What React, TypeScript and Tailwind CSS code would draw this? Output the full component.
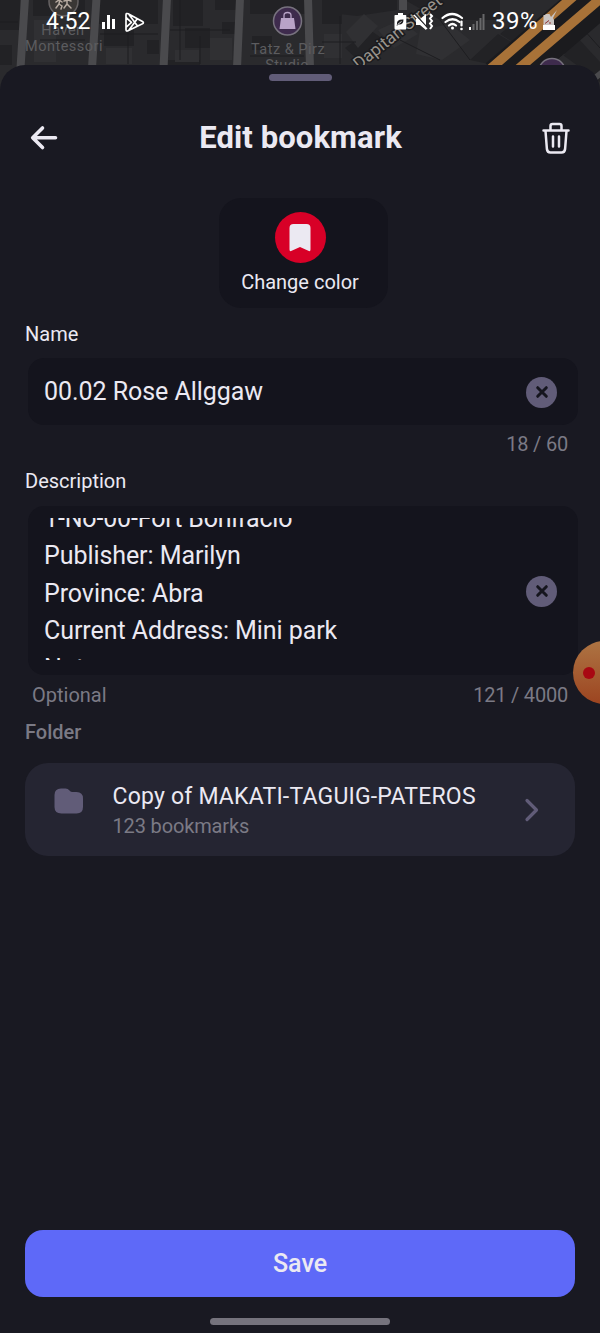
import React from "react";

function MapBackdrop() {
  return (
    <svg className="absolute left-0 top-0" width="600" height="110" viewBox="0 0 600 110">
      <rect width="600" height="110" fill="#2a2a2d" />
      <g fill="#222225">
        <path d="M0 0h20v30H0zM33 0h52v16H33zM98 0h60v24H98zM104 20h30v26h-30zM173 0h30v26h-30zM185 28h25v20h-25zM215 0h22v10h-22zM222 22h14v12h-14zM147 40h12v14h-12zM250 0h55v14h-55zM252 36h20v14h-20zM168 60h32v6h-32z" />
        <path d="M322 0h75v10l-40 6-35-4zM322 12h20v12h-20zM345 48l25-18 20 14-28 20zM405 0h95v20h-60zM470 60l28-26 20 12-20 20zM500 34l22-18 8 14-14 14zM560 20l30-20h10v20l-24 22zM556 50l20-14 24 26v20zM0 45h12v20H0z" />
      </g>
      <g fill="#303033">
        <path d="M346 32l18-18 14 12-20 22zM378 30l22-10 18 14-24 14zM324 34h18v24h-18zM420 30l30-6 20 16-28 20-26-6zM545 46l20 8-12 10zM34 20h22v42H34zM106 48h26v16h-26zM175 50h24v12h-24zM210 38h22v22h-22z" />
      </g>
      <g stroke="#1d1d20" strokeWidth="1" fill="none">
        <path d="M0 22h18M40 40h45M128 20v44M100 34h58M180 0v60M170 30h60M200 36v28M250 56h54M340 16v48M322 42h34M440 20l30 40M400 40l40 20M575 20l25 28" />
      </g>
      <g stroke="#4a4a4d" strokeWidth="8" fill="none">
        <path d="M25 -2L20.500 68M96.500 -2L92 68M167 -2L163.500 68M240 -2L237 68M308 -2L310 68" />
        <path d="M403 -2v12" />
        <path d="M585 86L610 66" strokeWidth="6" />
      </g>
      <g stroke="#1b1b1e" strokeWidth="44">
        <path d="M500 80L612 -16" />
      </g>
      <g stroke="#a87238" strokeWidth="9.500">
        <path d="M489 70L575 -5M517 70L607 -7" />
      </g>
      <g fontFamily="Roboto, sans-serif" fill="#5c5c5f" fontSize="14.500" textAnchor="middle">
        <text x="63" y="35" letterSpacing="0.5">Haven</text>
        <text x="64" y="51" letterSpacing="0.5">Montessori</text>
        <text x="288" y="54" letterSpacing="0.5">Tatz &amp; Pirz</text>
        <text x="287" y="70" letterSpacing="0.4">Studio</text>
      </g>
      <text
        transform="translate(359 70) rotate(-38.500)"
        fontFamily="Roboto, sans-serif"
        fontSize="17"
        letterSpacing="0"
        fill="#98938c"
        stroke="#1b1b1e"
        strokeWidth="3"
        paintOrder="stroke"
      >
        Dapitan Street
      </text>
      <circle cx="63.500" cy="1.500" r="14.500" fill="#3a3735" stroke="#666263" strokeWidth="1.500" />
      <g stroke="#b8aca2" strokeWidth="1.500" fill="none" strokeLinecap="round">
        <path d="M56 2l3-2 3 2M60 -1l-1 5-3 4M59 4l3 2-1 3M64 1l4-1 3 1M67 -1v5l-3 4M67 4l4 4" />
      </g>
      <circle cx="287.500" cy="21" r="14" fill="#3e2b4d" stroke="#77727e" strokeWidth="1.500" />
      <path d="M281 18h13l1.500 11h-16z" fill="#b9a3c8" />
      <path d="M284 18v-2.500q0-3 3.500-3t3.500 3v2.500" fill="none" stroke="#b9a3c8" strokeWidth="1.300" />
      <circle cx="552" cy="72" r="13.500" fill="#3e2b4d" stroke="#77727e" strokeWidth="1.500" />
    </svg>
  );
}

function StatusBar() {
  return (
    <div className="relative flex h-[65px] items-start pl-[46px] pr-[41px] pt-[8px] text-white">
      <span className="w-[46px] text-[23px] leading-[27px]">4:52</span>
      <svg className="ml-[9px] mt-[4px]" width="46" height="22" viewBox="0 0 46 22">
        <path d="M1 10h3v7H1zM6 3h3v14H6zM11 7h3v10h-3z" fill="#fff" />
        <path
          d="M27.200 1.800Q25 .8 25 3v14.500q0 2.200 2 1.200l14.500-7q1.800-1 0-2.200zM28 2.500l8.500 11.500M28 18l8.500-11.500M25.500 6l5 4.300-5 4.500"
          fill="none"
          stroke="#fff"
          strokeWidth="1.700"
          strokeLinejoin="round"
        />
      </svg>
      <svg className="ml-auto mt-[2px]" width="94" height="26" viewBox="0 0 94 26">
        <path d="M4 3h5v2h2.500q.8 0 .8.800v12.700q0 1-1 1H1.500q-1 0-1-1V5.800Q.5 5 1.300 5H4z" fill="#fff" />
        <path d="M3 14q-.5-5 6.500-4.500 0 5.500-5 5l-1.800 1.500" fill="#1d1d20" />
        <path d="M3.500 14.500l4-3" stroke="#fff" strokeWidth=".8" />
        <path d="M22 9h4l6-5v16l-6-5h-4z" fill="#fff" />
        <path d="M21 4l13 14.500" stroke="#29292c" strokeWidth="1.500" />
        <path d="M20 5l13 14" stroke="#fff" strokeWidth="1.300" />
        <path d="M36 4l2 2-2 2.500 2 2.500-2 2.500 2 2.500-2 3" fill="none" stroke="#fff" strokeWidth="2" />
        <g fill="none" stroke="#fff" strokeWidth="2.200" strokeLinecap="round">
          <path d="M48.500 8q9.500-8 19.500 0M51.500 12q7-5.500 14 0M55 15.500q3.500-3 7 0" />
          <path d="M67.500 11.500v4" />
        </g>
        <circle cx="58.500" cy="18" r="1.500" fill="#fff" />
        <circle cx="67.500" cy="19" r="1.300" fill="#fff" />
        <path d="M75 17h2v3h-2z" fill="#fff" />
        <path d="M78.500 14h2v6h-2zM82 11h2v9h-2zM85.500 8h2v12h-2zM88.500 4h2v16h-2z" fill="#68686a" />
      </svg>
      <span className="ml-[4px] w-[50px] text-[24px] leading-[27px] tracking-[0.5px]">39%</span>
      <svg className="mt-[1px]" width="17" height="22" viewBox="0 0 17 22">
        <path d="M1.500 6h2V5h4l1.500 3 6-7-4 8 1 2v9H1.500z" fill="#c9c4c2" />
        <path d="M1 16h12v5H1z" fill="#fff" />
        <path d="M3 14.500l4-3M7 14h2" stroke="#8f3434" strokeWidth="1" />
      </svg>
    </div>
  );
}

function ClearButton() {
  return (
    <button aria-label="Clear" className="mt-px flex size-[31px] items-center justify-center rounded-full bg-[#615c78]">
      <svg width="14" height="14" viewBox="0 0 14 14">
        <path d="M2.700 2.700l8.600 8.600M11.300 2.700l-8.600 8.600" stroke="#15151e" strokeWidth="3" strokeLinecap="round" />
      </svg>
    </button>
  );
}

export default function App() {
  return (
    <div className="relative flex h-[1333px] w-[600px] flex-col overflow-hidden bg-[#191922] font-['Roboto',sans-serif] text-[#ebe9f2]">
      <MapBackdrop />
      <StatusBar />
      <main className="relative flex flex-1 flex-col rounded-t-[25px] bg-[#191922] px-[25px]">
        <div className="mt-[9px] h-[7px] w-[63px] self-center rounded-full bg-[#615c78]" />

        <header className="mt-[27px] flex h-[60px] items-center justify-between">
          <button aria-label="Back" className="pl-[5px]">
            <svg width="30" height="26" viewBox="0 0 30 26">
              <path d="M25.500 12.700H3M12.500 3L2.700 12.700l9.800 9.800" fill="none" stroke="#ebe9f2" strokeWidth="3.600" strokeLinecap="round" strokeLinejoin="round" />
            </svg>
          </button>
          <h1 className="text-[31px] font-bold leading-[36px] tracking-[0.1px]">Edit bookmark</h1>
          <button aria-label="Delete" className="pr-[4px]">
            <svg width="30" height="34" viewBox="0 0 30 34">
              <g fill="none" stroke="#ebe9f2" strokeWidth="2.500" strokeLinecap="round" strokeLinejoin="round">
                <path d="M2.500 9.500h25M9.500 9V5q0-2 2-2h7q2 0 2 2v4M4.500 10l1.400 18q.4 3.500 3.500 3.500h11.200q3.100 0 3.500-3.500L25.500 10M12 15.500v10M18 15.500v10" />
              </g>
            </svg>
          </button>
        </header>

        <button className="ml-[194px] mt-[30px] flex h-[110px] w-[169px] flex-col items-center rounded-[22px] bg-[#14141d] pr-[7px] pt-[14px]">
          <span className="flex size-[51px] items-center justify-center rounded-full bg-[#d80027]">
            <svg width="22" height="28" viewBox="0 0 22 28">
              <path d="M4.500 0h13q4 0 4 4v21.500q0 2.500-2.200 1.300L11 23l-8.300 3.800Q.5 28 .5 25.500V4q0-4 4-4z" fill="#ebe9f2" />
            </svg>
          </span>
          <span className="mt-[7px] text-[20px] leading-[24px]">Change color</span>
        </button>

        <label className="mt-[14px] text-[20px] leading-[24px]">Name</label>
        <div className="ml-[3px] -mr-[3px] mt-[12px] flex h-[67px] items-center justify-between rounded-[16px] bg-[#14141d] pl-[16px] pr-[21px]">
          <span className="text-[25px] leading-[30px] tracking-[-0.05px]">00.02 Rose Allggaw</span>
          <ClearButton />
        </div>
        <div className="mr-[7px] mt-[7px] self-end text-[20px] leading-[24px] tracking-[-0.2px] text-[#7b7a85]">18 / 60</div>

        <label className="mt-[13px] text-[20px] leading-[24px]">Description</label>
        <div className="ml-[3px] -mr-[3px] mt-[13px] flex h-[169px] items-center justify-between rounded-[16px] bg-[#14141d] pl-[16px] pr-[21px]">
          <div className="mt-[12px] h-[142px] self-start overflow-hidden text-[25px] leading-[37.5px] tracking-[-0.07px]">
            <div className="-mt-[18.5px]">
              <p className="tracking-[-0.15px]">1-No-00-Fort Bonifacio</p>
              <p>Publisher: Marilyn</p>
              <p>Province: Abra</p>
              <p>Current Address: Mini park</p>
              <p>Note</p>
            </div>
          </div>
          <ClearButton />
        </div>
        <div className="ml-[7px] mr-[7px] mt-[8px] flex justify-between text-[20px] leading-[24px] text-[#7b7a85]">
          <span>Optional</span>
          <span className="tracking-[-0.2px]">121 / 4000</span>
        </div>

        <h2 className="mt-[13px] text-[20px] font-medium leading-[24px] text-[#7b7a85]">Folder</h2>
        <button className="mt-[19px] flex h-[93px] items-center rounded-[23px] bg-[#252532] pl-[29px] pr-[35px] text-left">
          <svg className="mb-[18px]" width="30" height="26" viewBox="0 0 30 26">
            <path d="M7 .5h4.500q2.500 0 4 2 1.300 1.500 3 1.500H22.500q6.500 0 6.500 6.500v8.500q0 6.500-6.500 6.500H7.500Q.5 25.500.5 19V7Q.5.500 7 .5z" fill="#615c78" />
          </svg>
          <span className="ml-[28.5px] mt-[2px] flex flex-col">
            <span className="text-[23px] leading-[30px] tracking-[0.2px]">Copy of MAKATI-TAGUIG-PATEROS</span>
            <span className="text-[20px] leading-[28px] tracking-[-0.15px] text-[#7b7a85]">123 bookmarks</span>
          </span>
          <svg className="ml-auto" width="16" height="26" viewBox="0 0 16 26">
            <path d="M3 3.500l9.500 9.500L3 22.500" fill="none" stroke="#615c78" strokeWidth="3.200" strokeLinecap="round" strokeLinejoin="round" />
          </svg>
        </button>

        <button className="mb-[21px] mt-auto h-[67px] shrink-0 rounded-[18px] bg-[#5e69f8] text-[25px] font-medium leading-[30px]">
          Save
        </button>
        <div className="mb-[8px] h-[7px] w-[180px] shrink-0 self-center rounded-full bg-[#75737d]" />
      </main>
      <div className="absolute left-[573px] top-[641px] size-[63px] rounded-full bg-linear-to-b from-[#ad7443] to-[#9c4420]">
        <div className="absolute left-[10px] top-[26px] size-[12px] rounded-full bg-[#a80812]" />
      </div>
    </div>
  );
}
